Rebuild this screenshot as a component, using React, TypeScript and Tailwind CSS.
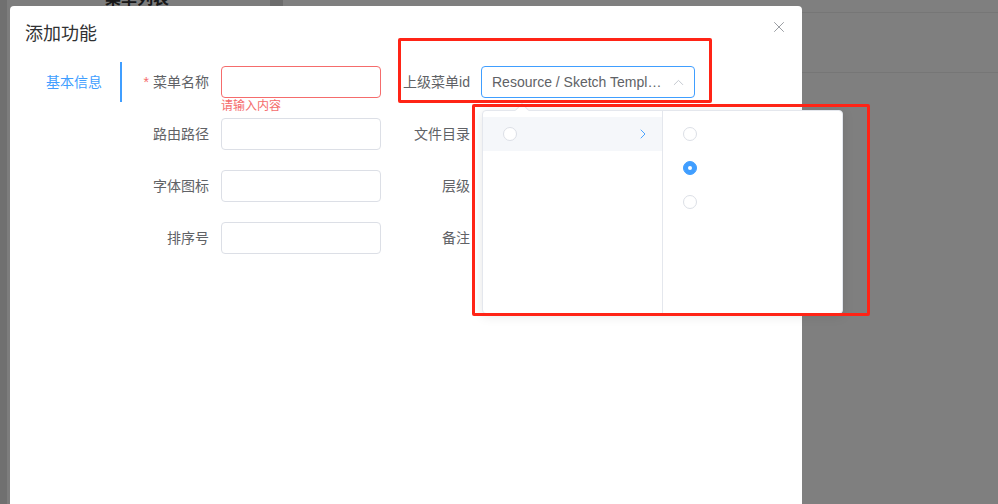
import { X, ChevronUp, ChevronRight } from 'lucide-react'

const font = { fontFamily: '"Liberation Sans", "Noto Sans CJK SC", sans-serif' }

function Radio({ checked = false }: { checked?: boolean }) {
    return checked ? (
        <span className="w-[14px] h-[14px] rounded-full bg-[#409eff] border border-[#409eff] flex items-center justify-center">
            <span className="w-1 h-1 rounded-full bg-white" />
        </span>
    ) : (
        <span className="w-[14px] h-[14px] rounded-full bg-white border border-[#dcdfe6]" />
    )
}

function Field({ label, required, error, children }: { label: string; required?: boolean; error?: string; children?: React.ReactNode }) {
    return (
        <div className="flex items-center h-8">
            <label className="w-[99px] pr-3 text-right text-sm text-[#606266] shrink-0">
                {required && <span className="text-[#f56c6c] mr-1">*</span>}
                {label}
            </label>
            <div className="relative">
                {children ?? (
                    <div className={`w-[160px] h-8 rounded border bg-white ${error ? 'border-[#f56c6c]' : 'border-[#dcdfe6]'}`} />
                )}
                {error && <p className="absolute left-0 top-[32px] text-xs leading-4 text-[#f56c6c] whitespace-nowrap">{error}</p>}
            </div>
        </div>
    )
}

function RightLabel({ label, children }: { label: string; children?: React.ReactNode }) {
    return (
        <div className="flex items-center h-8">
            <label className="w-[100px] pr-[11px] text-right text-sm text-[#606266] shrink-0">{label}</label>
            {children}
        </div>
    )
}

export default function App() {
    return (
        <div className="relative w-[998px] h-[504px] overflow-hidden bg-white" style={font}>
            {/* page underneath */}
            <div className="flex h-full">
                <div className="w-[7px] bg-[#e0e0e0]" />
                <div className="w-[263px] bg-[#fafafa] relative">
                    <p className="absolute left-[98px] -top-[13px] text-base font-bold text-[#303133]">菜单列表</p>
                </div>
                <div className="w-[13px] bg-[#d8d8d8]" />
                <div className="flex-1 flex flex-col">
                    <div className="h-[13px] border-b border-[#ececec]" />
                    <div className="h-[60px] border-b border-[#ececec]" />
                </div>
            </div>

            {/* overlay */}
            <div className="absolute inset-0 bg-black/50" />

            {/* dialog */}
            <div className="absolute left-[10px] top-[6px] w-[792px] h-[520px] bg-white rounded-sm">
                <div className="flex items-start justify-between pl-[15px] pr-[14px] pt-[16px]">
                    <h2 className="text-lg leading-6 text-[#303133]">添加功能</h2>
                    <X size={18} strokeWidth={1.2} className="text-[#909399] -mt-[4px]" />
                </div>

                <div className="flex mt-[16px]">
                    {/* tabs */}
                    <div className="w-[112px] shrink-0">
                        <div className="h-10 flex items-center justify-end pr-[18px] text-sm text-[#409eff] border-r-2 border-[#409eff]">基本信息</div>
                    </div>

                    {/* form */}
                    <div className="flex flex-col gap-5 pt-1">
                        <div className="flex">
                            <Field label="菜单名称" required error="请输入内容" />
                            <RightLabel label="上级菜单id">
                                <div className="w-[214px] h-8 rounded border border-[#409eff] flex items-center pl-[10px] pr-[7px] gap-1">
                                    <span className="flex-1 truncate text-sm text-[#606266]">Resource / Sketch Template / Layout</span>
                                    <ChevronUp size={17} strokeWidth={1.3} className="text-[#c0c4cc] shrink-0" />
                                </div>
                            </RightLabel>
                        </div>
                        <div className="flex">
                            <Field label="路由路径" />
                            <RightLabel label="文件目录" />
                        </div>
                        <div className="flex">
                            <Field label="字体图标" />
                            <RightLabel label="层级" />
                        </div>
                        <div className="flex">
                            <Field label="排序号" />
                            <RightLabel label="备注" />
                        </div>
                    </div>
                </div>
            </div>

            {/* cascader dropdown */}
            <div className="absolute left-[482px] top-[110px] w-[361px] h-[204px] bg-white border border-[#e4e7ed] rounded shadow-[0_2px_12px_rgba(0,0,0,0.1)] flex">
                <span className="absolute left-[34px] -top-[6px] w-[10px] h-[10px] bg-white border-l border-t border-[#e4e7ed] rotate-45" />
                <div className="w-[180px] border-r border-[#e4e7ed] py-[6px]">
                    <div className="h-[34px] bg-[#f5f7fa] flex items-center pl-[20px] pr-[11px]">
                        <Radio />
                        <span className="flex-1" />
                        <ChevronRight size={16} strokeWidth={1.4} className="text-[#409eff]" />
                    </div>
                </div>
                <div className="w-[180px] py-[6px]">
                    <div className="h-[34px] flex items-center pl-[20px]"><Radio /></div>
                    <div className="h-[34px] flex items-center pl-[20px]"><Radio checked /></div>
                    <div className="h-[34px] flex items-center pl-[20px]"><Radio /></div>
                </div>
            </div>

            {/* annotations */}
            <div className="absolute left-[398px] top-[38px] w-[314px] h-[65px] border-[3px] border-[#ff2416] rounded-[2px]" />
            <div className="absolute left-[472px] top-[104px] w-[398px] h-[212px] border-[3px] border-[#ff2416] rounded-[2px]" />
        </div>
    )
}
